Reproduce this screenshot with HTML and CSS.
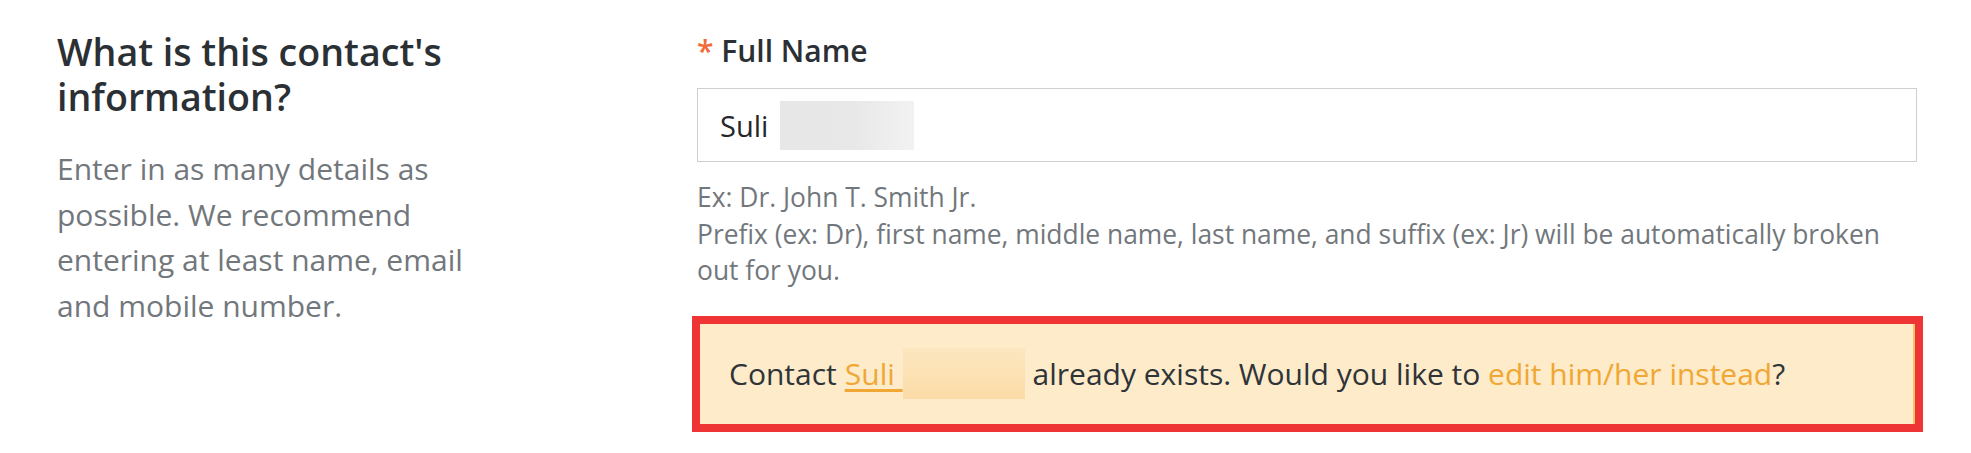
FILE: index.html
```html
<!DOCTYPE html>
<html lang="en">
<head>
<meta charset="utf-8">
<title>Contact information</title>
<link rel="stylesheet" href="styles.css">
</head>
<body>
<div class="page">
  <section class="intro">
    <h2 class="intro-title">What is this contact's information?</h2>
    <p class="intro-text">Enter in as many details as possible. We recommend entering at least name, email and mobile number.</p>
  </section>
  <section class="form">
    <label class="field-label"><span class="req">*</span> Full Name</label>
    <div class="input">
      <span class="input-value">Suli</span>
      <span class="blur blur-gray"></span>
    </div>
    <div class="hint">
      <div>Ex: Dr. John T. Smith Jr.</div>
      <div>Prefix (ex: Dr), first name, middle name, last name, and suffix (ex: Jr) will be automatically broken out for you.</div>
    </div>
    <div class="highlight">
      <div class="alert">
        <span>Contact</span>
        <a class="alert-name" href="#">Suli&nbsp;</a><span class="blur blur-warm"></span>
        <span>already exists. Would you like to <a class="alert-link" href="#">edit him/her instead</a>?</span>
      </div>
    </div>
  </section>
</div>
</body>
</html>
```

FILE: styles.css
```css
* { box-sizing: border-box; }

body {
  margin: 0;
  background: #ffffff;
  font-family: "Open Sans", "Noto Sans", sans-serif;
}

.page {
  display: flex;
  padding: 0 54px 0 57px;
}

.intro {
  width: 440px;
  padding-top: 29px;
}

.intro-title {
  margin: 0;
  font-size: 37.6px;
  line-height: 45px;
  font-weight: 600;
  color: #2b3035;
}

.intro-text {
  margin: 27px 0 0;
  font-size: 30px;
  line-height: 45.5px;
  color: #72777c;
}

.form {
  flex: 1;
  margin-left: 200px;
  padding-top: 33px;
}

.field-label {
  display: block;
  font-size: 30px;
  line-height: 36px;
  font-weight: 600;
  color: #2b3035;
}

.req {
  color: #f26b3a;
}

.input {
  margin-top: 19px;
  height: 74px;
  border: 1px solid #cfcfcf;
  display: flex;
  align-items: center;
  padding-left: 22px;
  font-size: 29px;
  color: #23272b;
}

.blur {
  display: inline-block;
}

.blur-gray {
  margin-left: 12px;
  width: 134px;
  height: 49px;
  background: linear-gradient(90deg, #e7e7e8 0%, #e8e8e9 55%, #f2f2f2 100%);
}

.hint {
  margin-top: 17px;
  padding-right: 36px;
  font-size: 26.4px;
  line-height: 36.5px;
  color: #72777c;
}

.highlight {
  margin: 27px -6px 0 -5px;
  border: 8px solid #ee3434;
}

.alert {
  height: 100px;
  background: #fdebca;
  border-right: 2px solid #f6c26a;
  display: flex;
  align-items: center;
  padding-left: 29px;
  font-size: 30px;
  color: #2f3438;
  white-space: pre;
}

.alert-name {
  margin-left: 8px;
  color: #f0a733;
  text-decoration: underline;
  text-decoration-thickness: 3px;
  text-underline-offset: 4px;
}

.blur-warm {
  width: 122px;
  height: 51px;
  background: linear-gradient(180deg, #fce6c0 0%, #fbdca7 100%);
  margin-right: 8px;
}

.alert-link {
  color: #f0a733;
  text-decoration: none;
}
```
